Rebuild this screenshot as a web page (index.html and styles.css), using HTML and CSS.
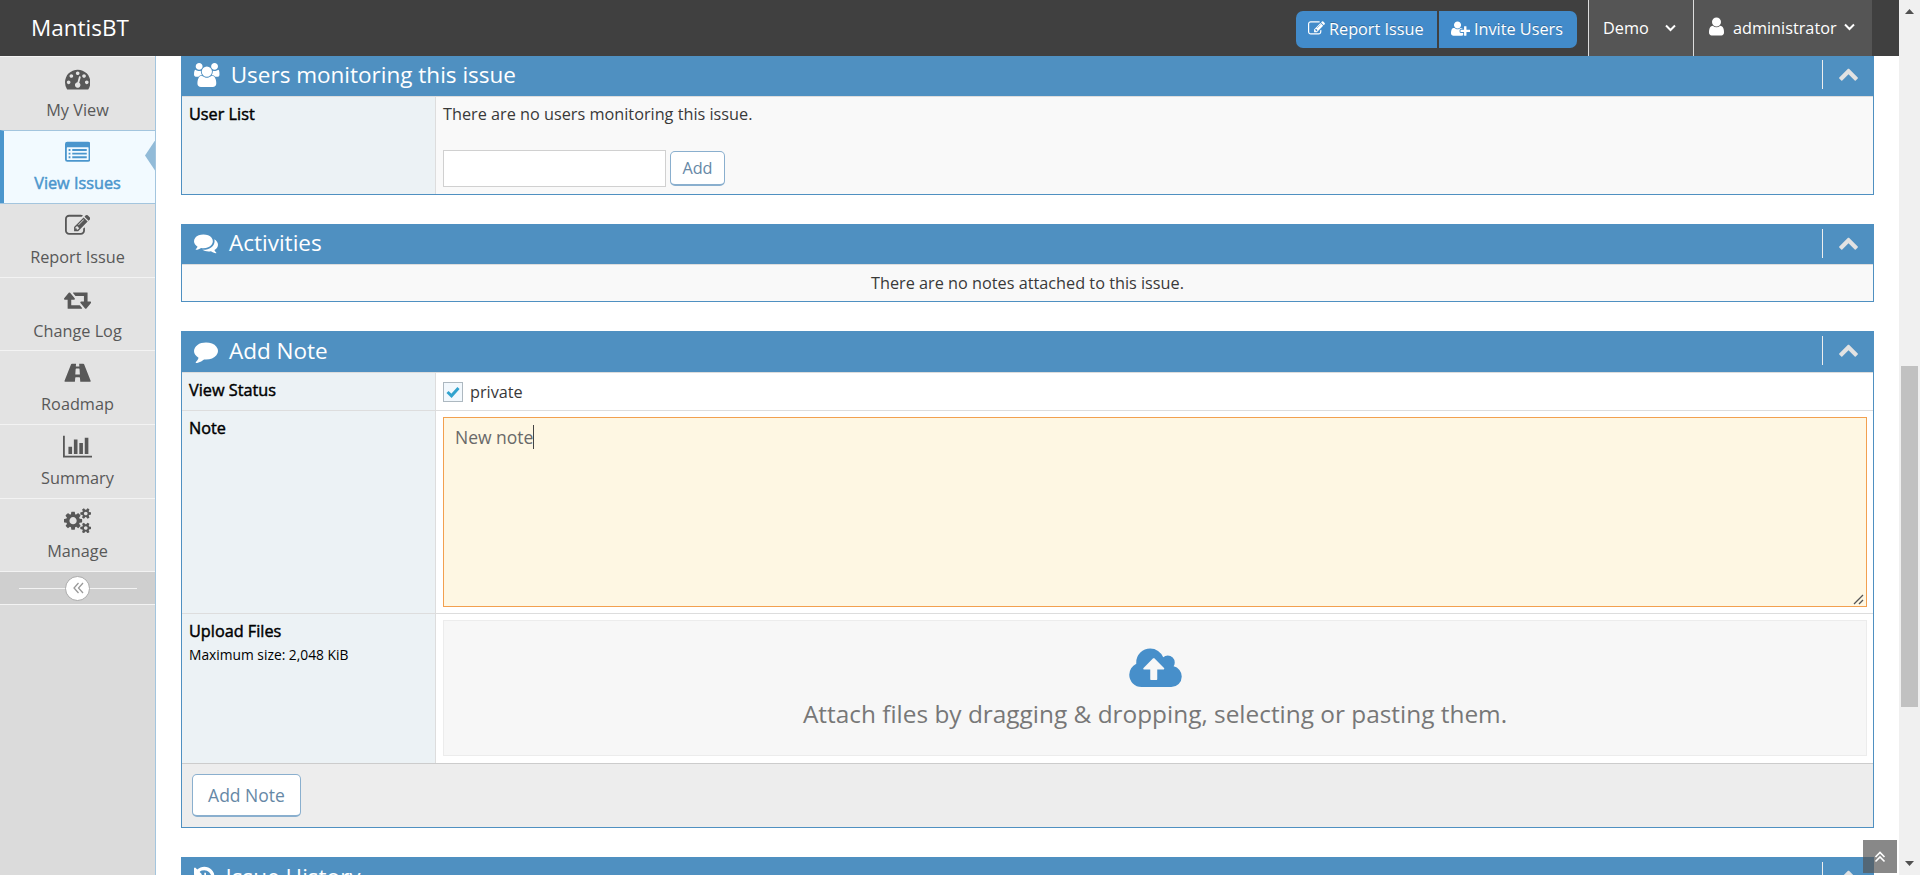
FILE: index.html
```
<!DOCTYPE html>
<html lang="en">
<head>
<meta charset="utf-8">
<title>MantisBT</title>
<link rel="stylesheet" href="styles.css">
</head>
<body>
<svg class="defs" aria-hidden="true">
<symbol id="dash" viewBox="0 0 1792 1792"><path d="M384 1152q0-53-37.5-90.5t-90.5-37.5-90.5 37.5-37.5 90.5 37.5 90.5 90.5 37.5 90.5-37.5 37.5-90.5zm192-448q0-53-37.5-90.5t-90.5-37.5-90.5 37.5-37.5 90.5 37.5 90.5 90.5 37.5 90.5-37.5 37.5-90.5zm428 481l101-382q6-26-7.5-48.5t-38.5-29.5-48 6.5-30 39.5l-101 382q-60 5-107 43.5t-63 98.5q-20 77 20 146t117 89 146-20 89-117q16-60-6-117t-72-91zm660-33q0-53-37.5-90.5t-90.5-37.5-90.5 37.5-37.5 90.5 37.5 90.5 90.5 37.5 90.5-37.5 37.5-90.5zm-640-640q0-53-37.5-90.5t-90.5-37.5-90.5 37.5-37.5 90.5 37.5 90.5 90.5 37.5 90.5-37.5 37.5-90.5zm448 192q0-53-37.5-90.5t-90.5-37.5-90.5 37.5-37.5 90.5 37.5 90.5 90.5 37.5 90.5-37.5 37.5-90.5zm320 448q0 261-141 483-19 29-54 29h-1402q-35 0-54-29-141-221-141-483 0-182 71-348t191-286 286-191 348-71 348 71 286 191 191 286 71 348z"/></symbol>
<symbol id="list" viewBox="0 0 1792 1792"><path fill-rule="evenodd" d="M160 128h1472a160 160 0 0 1 160 160v1088a160 160 0 0 1-160 160H160a160 160 0 0 1-160-160V288a160 160 0 0 1 160-160zM160 512a32 32 0 0 0-32 32v832a32 32 0 0 0 32 32h1472a32 32 0 0 0 32-32V544a32 32 0 0 0-32-32z"/><path d="M256 640h128v128H256zM256 896h128v128H256zM256 1152h128v128H256zM512 640h1024v128H512zM512 896h1024v128H512zM512 1152h1024v128H512z"/></symbol>
<symbol id="edit" viewBox="0 0 1792 1792"><path d="M888 1184l116-116-152-152-116 116v56h96v96h56zm440-720q-16-16-33 1l-350 350q-17 17-1 33t33-1l350-350q17-17 1-33zm80 594v190q0 119-84.5 203.5t-203.5 84.5h-832q-119 0-203.5-84.5t-84.5-203.5v-832q0-119 84.5-203.5t203.5-84.5h832q63 0 117 25 15 7 18 23 3 17-9 29l-49 49q-14 14-32 8-23-6-45-6h-832q-66 0-113 47t-47 113v832q0 66 47 113t113 47h832q66 0 113-47t47-113v-126q0-13 9-22l64-64q15-15 35-7t20 29zm-96-738l288 288-672 672h-288v-288zm444 132l-92 92-288-288 92-92q28-28 68-28t68 28l152 152q28 28 28 68t-28 68z"/></symbol>
<symbol id="retweet" viewBox="0 0 1920 1792"><path d="M1280 1504q0 13-9.5 22.5t-22.5 9.5h-960q-8 0-13.5-2t-9-7-5.5-8-3-11.5-1-11.5v-600h-192q-26 0-45-19t-19-45q0-24 15-41l320-384q19-22 49-22t49 22l320 384q15 17 15 41 0 26-19 45t-45 19h-192v384h576q16 0 25 11l160 192q7 10 7 21zm640-416q0 24-15 41l-320 384q-20 23-49 23t-49-23l-320-384q-15-17-15-41 0-26 19-45t45-19h192v-384h-576q-16 0-25-12l-160-192q-7-9-7-20 0-13 9.5-22.5t22.5-9.5h960q8 0 13.5 2t9 7 5.5 8 3 11.5 1 11.5v600h192q26 0 45 19t19 45z"/></symbol>
<symbol id="road" viewBox="0 0 1920 1792"><path fill-rule="evenodd" d="M560 256H850L836 440q-2 24 22 24h204q24 0 22-24L1070 256h290q42 0 60 42l440 1120q52 118-25 118H1150l-24-290q-2-30-34-30H828q-32 0-34 30l-24 290H85q-77 0-25-118L500 298q18-42 60-42zM850 608q-24 0-26 26l-26 370q-2 28 26 28h272q28 0 26-28l-26-370q-2-26-26-26z"/></symbol>
<symbol id="bars" viewBox="0 0 2048 1792"><path d="M640 896v512h-256v-512h256zm384-512v1024h-256v-1024h256zm1024 1152v128h-2048v-1536h128v1408h1920zm-640-896v768h-256v-768h256zm384-384v1152h-256v-1152h256z"/></symbol>
<symbol id="cogs" viewBox="0 0 1920 1792"><path d="M896 896q0-106-75-181t-181-75-181 75-75 181 75 181 181 75 181-75 75-181zm768 512q0-52-38-90t-90-38-90 38-38 90q0 53 37.5 90.5t90.5 37.5 90.5-37.5 37.5-90.5zm0-1024q0-52-38-90t-90-38-90 38-38 90q0 53 37.5 90.5t90.5 37.5 90.5-37.5 37.5-90.5zm-384 421v185q0 10-7 19.5t-16 10.5l-155 24q-11 35-32 76 34 48 90 115 7 11 7 20 0 12-7 19-23 30-82.5 89.5t-78.5 59.5q-11 0-21-7l-115-90q-37 19-77 31-11 108-23 155-7 24-30 24h-186q-11 0-20-7.5t-10-17.5l-23-153q-34-10-75-31l-118 89q-7 7-20 7-11 0-21-8-144-133-144-160 0-9 7-19 10-14 41-53t47-61q-23-44-35-82l-152-24q-10-1-17-9.5t-7-19.5v-185q0-10 7-19.5t16-10.5l155-24q11-35 32-76-34-48-90-115-7-11-7-20 0-12 7-20 22-30 82-89t79-59q11 0 21 7l115 90q34-18 77-32 11-108 23-154 7-24 30-24h186q11 0 20 7.5t10 17.5l23 153q34 10 75 31l118-89q8-7 20-7 11 0 21 8 144 133 144 160 0 8-7 19-12 16-42 54t-45 60q23 48 34 82l152 23q10 2 17 10.5t7 19.5zm640 533v140q0 16-149 31-12 27-30 52 51 113 51 138 0 4-4 7-122 71-124 71-8 0-46-47t-52-68q-20 2-30 2t-30-2q-14 21-52 68t-46 47q-2 0-124-71-4-3-4-7 0-25 51-138-18-25-30-52-149-15-149-31v-140q0-16 149-31 13-29 30-52-51-113-51-138 0-4 4-7 4-2 35-20t59-34 30-16q8 0 46 46.5t52 67.5q20-2 30-2t30 2q51-71 92-112l6-2q4 0 124 70 4 3 4 7 0 25-51 138 17 23 30 52 149 15 149 31zm0-1024v140q0 16-149 31-12 27-30 52 51 113 51 138 0 4-4 7-122 71-124 71-8 0-46-47t-52-68q-20 2-30 2t-30-2q-14 21-52 68t-46 47q-2 0-124-71-4-3-4-7 0-25 51-138-18-25-30-52-149-15-149-31v-140q0-16 149-31 13-29 30-52-51-113-51-138 0-4 4-7 4-2 35-20t59-34 30-16q8 0 46 46.5t52 67.5q20-2 30-2t30 2q51-71 92-112l6-2q4 0 124 70 4 3 4 7 0 25-51 138 17 23 30 52 149 15 149 31z"/></symbol>
<symbol id="users" viewBox="0 0 1920 1792"><path d="M593 896q-162 5-265 128h-134q-82 0-138-40.5t-56-118.5q0-353 124-353 6 0 43.5 21t97.5 42.5 119 21.5q67 0 133-23-5 37-5 66 0 139 81 256zm1071 637q0 120-73 189.5t-194 69.5h-874q-121 0-194-69.5t-73-189.5q0-53 3.5-103.5t14-109 26.5-108.5 43-97.5 62-81 85.5-53.5 111.5-20q10 0 43 21.5t73 48 107 48 135 21.5 135-21.5 107-48 73-48 43-21.5q61 0 111.5 20t85.5 53.5 62 81 43 97.5 26.5 108.5 14 109 3.5 103.5zm-1024-1277q0 106-75 181t-181 75-181-75-75-181 75-181 181-75 181 75 75 181zm704 384q0 159-112.5 271.5t-271.5 112.5-271.5-112.5-112.5-271.5 112.5-271.5 271.5-112.5 271.5 112.5 112.5 271.5zm576 225q0 78-56 118.5t-138 40.5h-134q-103-123-265-128 81-117 81-256 0-29-5-66 66 23 133 23 59 0 119-21.5t97.5-42.5 43.5-21q124 0 124 353zm-128-609q0 106-75 181t-181 75-181-75-75-181 75-181 181-75 181 75 75 181z"/></symbol>
<symbol id="comments" viewBox="0 0 1792 1792"><path d="M1408 768q0 139-94 257t-256.500 186.500-353.500 68.500q-86 0-176-16-124 88-278 128-36 9-86 16h-3q-11 0-20.500-8t-11.500-21q-1-3-1-6.500t.5-6.500 2-6l2.500-5 3.500-5.500 4-5 4.500-5 4-4.500q5-6 23-25t26-29.500 22.500-29 25-38.500 20.500-44q-124-72-195-177t-71-224q0-139 94-257t256.500-186.500 353.500-68.500 353.500 68.500 256.500 186.500 94 257zm384 256q0 120-71 224.500t-195 176.500q10 24 20.500 44t25 38.500 22.500 29 26 29.500 23 25q1 1 4 4.500t4.500 5 4 5 3.500 5.500l2.500 5 2 6 .5 6.500-1 6.500q-3 14-13 22t-22 7q-50-7-86-16-154-40-278-128-90 16-176 16-271 0-472-132 58 4 88 4 161 0 309-45t264-129q125-92 192-212t67-254q0-77-23-152 129 71 204 178t75 230z"/></symbol>
<symbol id="comment" viewBox="0 0 1792 1792"><path d="M1792 896q0 174-120 321.500t-326 233-450 85.500q-70 0-145-8-198 175-460 242-49 14-114 22-17 2-30.500-9t-17.500-29v-1q-3-4-.5-12t2-10 4.500-9.500l6-9 7-8.500 8-9q7-8 31-34.500t34.500-38 31-39.500 32.500-51 27-59 26-76q-157-89-247.500-220t-90.500-281q0-130 71-248.500t191-204.500 286-136.500 348-50.500q244 0 450 85.500t326 233 120 321.500z"/></symbol>
<symbol id="history" viewBox="0 0 1536 1792"><path d="M1536 896q0 156-61 298t-164 245-245 164-298 61q-172 0-327-72.500t-264-204.500q-7-10-6.500-22.500t8.500-20.500l137-138q10-9 25-9 16 2 23 12 73 95 179 147t225 52q104 0 198.500-40.500t163.500-109.500 109.500-163.500 40.500-198.500-40.500-198.500-109.500-163.500-163.500-109.500-198.500-40.500q-98 0-188 35.500t-160 101.500l137 138q31 30 14 69-17 40-59 40h-448q-26 0-45-19t-19-45v-448q0-42 40-59 39-17 69 14l130 129q107-101 244.500-156.500t284.500-55.500q156 0 298 61t245 164 164 245 61 298zm-640-288v448q0 14-9 23t-23 9h-320q-14 0-23-9t-9-23v-64q0-14 9-23t23-9h224v-352q0-14 9-23t23-9h64q14 0 23 9t9 23z"/></symbol>
<symbol id="up" viewBox="0 0 1792 1792"><path d="M1683 1331l-166 165q-19 19-45 19t-45-19l-531-531-531 531q-19 19-45 19t-45-19l-166-165q-19-19-19-45.500t19-45.500l742-741q19-19 45-19t45 19l742 741q19 19 19 45.500t-19 45.500z"/></symbol>
<symbol id="user" viewBox="256 0 1280 1792"><path d="M1536 1399q0 109-62.500 187t-150.500 78h-854q-88 0-150.500-78t-62.500-187q0-85 8.500-160.500t31.500-152 58.500-131 94-89 134.500-34.500q131 128 313 128t313-128q76 0 134.500 34.500t94 89 58.500 131 31.500 152 8.500 160.500zm-256-887q0 159-112.500 271.500t-271.500 112.500-271.500-112.500-112.500-271.500 112.500-271.500 271.500-112.500 271.500 112.500 112.500 271.500z"/></symbol>
<symbol id="userplus" viewBox="0 0 2048 1792"><path d="M704 896q-159 0-271.500-112.500t-112.500-271.500 112.500-271.500 271.500-112.500 271.500 112.500 112.500 271.500-112.500 271.500-271.500 112.500zm960 128h352q13 0 22.500 9.500t9.500 22.500v192q0 13-9.500 22.500t-22.500 9.500h-352v352q0 13-9.500 22.500t-22.500 9.500h-192q-13 0-22.500-9.500t-9.500-22.500v-352h-352q-13 0-22.500-9.500t-9.500-22.500v-192q0-13 9.500-22.500t22.500-9.500h352v-352q0-13 9.500-22.500t22.500-9.500h192q13 0 22.500 9.500t9.500 22.500v352zm-736 224q0 52 38 90t90 38h256v238q-68 50-171 50h-874q-121 0-194-69t-73-190q0-53 3.500-103.500t14-109 26.500-108.500 43-97.500 62-81 85.500-53.500 111.500-20q19 0 39 17 79 61 154.500 91.500t164.500 30.500 164.500-30.500 154.500-91.500q20-17 39-17 132 0 217 96h-223q-52 0-90 38t-38 90v192z"/></symbol>
<symbol id="cloud" viewBox="0 0 1920 1792"><path d="M1280 864q0-14-9-23l-352-352q-9-9-23-9t-23 9l-351 351q-10 12-10 24 0 14 9 23t23 9h224v352q0 13 9.500 22.500t22.500 9.500h192q13 0 22.500-9.500t9.500-22.500v-352h224q13 0 22.500-9.500t9.500-22.500zm640 288q0 159-112.500 271.500t-271.500 112.500h-1088q-185 0-316.500-131.500t-131.500-316.500q0-130 70-240t188-165q-2-30-2-43 0-212 150-362t362-150q156 0 285.500 87t188.500 231q71-62 166-62 106 0 181 75t75 181q0 76-41 138 130 31 213.500 135.500t83.500 238.500z"/></symbol>
</svg>

<header class="navbar">
  <div class="brand">MantisBT</div>
  <nav class="nav-actions">
    <div class="btn-group">
      <a class="btn-primary report"><svg class="i-edit"><use href="#edit"/></svg>Report Issue</a>
      <a class="btn-primary invite"><svg class="i-plus"><use href="#userplus"/></svg>Invite Users</a>
    </div>
    <a class="drop project">Demo<svg class="angle" viewBox="0 0 11 8"><path d="M1 1.500l4.500 4.500L10 1.500"/></svg></a>
    <a class="drop account"><svg class="i-user"><use href="#user"/></svg>administrator<svg class="angle near" viewBox="0 0 11 8"><path d="M1 1.500l4.500 4.500L10 1.500"/></svg></a>
  </nav>
</header>

<div class="body">
  <aside class="sidebar">
    <a class="item"><svg><use href="#dash"/></svg><span>My View</span></a>
    <a class="item active"><svg><use href="#list"/></svg><span>View Issues</span></a>
    <a class="item"><svg><use href="#edit"/></svg><span>Report Issue</span></a>
    <a class="item"><svg class="wide"><use href="#retweet"/></svg><span>Change Log</span></a>
    <a class="item"><svg class="wide"><use href="#road"/></svg><span>Roadmap</span></a>
    <a class="item"><svg class="wider"><use href="#bars"/></svg><span>Summary</span></a>
    <a class="item"><svg class="wide"><use href="#cogs"/></svg><span>Manage</span></a>
    <div class="collapse"><i class="circle"><svg viewBox="0 0 11 12"><path d="M5.500 1L1 6l4.500 5M10 1L5.500 6l4.500 5"/></svg></i></div>
  </aside>

  <main class="content">
    <section class="widget monitoring">
      <h4 class="head"><svg class="wide"><use href="#users"/></svg><span>Users monitoring this issue</span><i class="toggle"><svg><use href="#up"/></svg></i></h4>
      <div class="row striped">
        <div class="th">User List</div>
        <div class="td">
          <div>There are no users monitoring this issue.</div>
          <div class="form"><input class="text" type="text"><button class="btn small">Add</button></div>
        </div>
      </div>
    </section>

    <section class="widget activities">
      <h4 class="head"><svg><use href="#comments"/></svg><span>Activities</span><i class="toggle"><svg><use href="#up"/></svg></i></h4>
      <div class="empty">There are no notes attached to this issue.</div>
    </section>

    <section class="widget addnote">
      <h4 class="head"><svg><use href="#comment"/></svg><span>Add Note</span><i class="toggle"><svg><use href="#up"/></svg></i></h4>
      <div class="row status">
        <div class="th">View Status</div>
        <div class="td check-cell"><i class="check"><svg viewBox="0 0 14 12"><path d="M1.500 6l4 3.800L12.500 2"/></svg></i>private</div>
      </div>
      <div class="row note">
        <div class="th">Note</div>
        <div class="td">
          <div class="textarea"><span>New note</span><i class="caret"></i>
            <svg class="grip" viewBox="0 0 11 11"><path d="M1 10l9-9M6 10l4-4"/></svg></div>
        </div>
      </div>
      <div class="row upload">
        <div class="th">Upload Files<small>Maximum size: 2,048 KiB</small></div>
        <div class="td"><div class="dropzone"><svg><use href="#cloud"/></svg><span>Attach files by dragging &amp; dropping, selecting or pasting them.</span></div></div>
      </div>
      <div class="toolbox"><button class="btn large">Add Note</button></div>
    </section>

    <section class="widget history">
      <h4 class="head"><svg class="narrow"><use href="#history"/></svg><span>Issue History</span><i class="toggle"><svg><use href="#up"/></svg></i></h4>
    </section>
  </main>
</div>

<div class="scrollbar"><i class="arrow arrow-up"></i><i class="thumb"></i><i class="arrow arrow-down"></i></div>
<a class="to-top"><svg viewBox="0 0 12 12"><path d="M1.500 6L6 1.500 10.500 6M1.500 10.500L6 6l4.500 4.500"/></svg></a>
</body>
</html>
```
FILE: styles.css
```
* { box-sizing: border-box; }
html, body { height: 100%; }
body {
  margin: 0;
  display: grid;
  grid-template: 56px minmax(0, 1fr) / minmax(0, 1fr) 21px;
  overflow: hidden;
  background: #fff;
  color: #393939;
  font: 16.25px/24px "Open Sans", sans-serif;
}
svg { fill: currentColor; flex: none; }
.defs { position: absolute; width: 0; height: 0; }

.navbar {
  display: flex;
  justify-content: space-between;
  background: #404040;
  color: #fff;
  position: relative;
  z-index: 1;
}
.brand { padding: 0 0 0 31px; font-size: 22.5px; line-height: 56px; }
.nav-actions { display: flex; margin-right: 27px; }
.btn-group { display: flex; gap: 2px; align-items: flex-start; padding-top: 11px; margin-right: 11px; }
.btn-primary {
  display: flex;
  align-items: center;
  gap: 4px;
  height: 37px;
  padding-bottom: 2px;
  background: #428bca;
  text-shadow: 0 -1px 0 rgba(0, 0, 0, .25);
}
.report { width: 141px; padding-left: 12px; border-radius: 7px 0 0 7px; }
.invite { width: 138px; padding-left: 12px; border-radius: 0 7px 7px 0; }
.i-edit { width: 17px; height: 17px; }
.i-plus { width: 19px; height: 17px; }
.drop {
  display: flex;
  align-items: center;
  height: 56px;
  background: #555;
  border-left: 1px solid #ddd;
}
.project { width: 105px; padding-left: 14px; }
.account { width: 179px; padding-left: 15px; }
.i-user { width: 15px; height: 21px; margin: -3px 9px 0 0; }
.angle { width: 11px; height: 8px; margin-left: 16px; fill: none; stroke: #fff; stroke-width: 2; }
.angle.near { margin-left: 7px; margin-top: -3px; }

.body { display: flex; min-height: 0; overflow: hidden; }
.sidebar {
  flex: none;
  width: 156px;
  background: #dbdbdb;
  border-right: 1px solid #a3c5de;
}
.item {
  display: flex;
  flex-direction: column;
  align-items: center;
  height: 73.6px;
  padding-top: 9px;
  border-top: 1px solid #f3f3f3;
  background: #e3e3e3;
  color: #585858;
  position: relative;
}
.item svg { width: 25.400px; height: 25.400px; }
.item svg.wide { width: 27.200px; }
.item svg.wider { width: 29px; }
.item span { margin-top: 6.5px; }
.item.active {
  background: #f2faff;
  border-top-color: #a3c5de;
  color: #4b96cd;
  border-left: 4px solid #4b96cd;
  padding-right: 4px;
  box-shadow: 0 1px 0 #a3c5de;
  z-index: 1;
}
.item.active span { -webkit-text-stroke: .5px; }
.item.active::after {
  content: "";
  position: absolute;
  right: 0;
  top: 10px;
  width: 10px;
  height: 30px;
  background: #92bbd8;
  clip-path: polygon(100% 0, 100% 100%, 0 50%);
}
.collapse {
  display: flex;
  align-items: center;
  justify-content: center;
  height: 34px;
  border: solid #f3f3f3;
  border-width: 1px 0;
  background: linear-gradient(#f3f3f3, #f3f3f3) 19px 16px / 118px 1px no-repeat #cfcfcf;
}
.circle {
  display: grid;
  place-items: center;
  width: 25px;
  height: 25px;
  border: 1px solid #aaa;
  border-radius: 50%;
  background: #fff;
}
.circle svg { width: 11px; height: 12px; fill: none; stroke: #999; stroke-width: 1.3; margin-left: 1px; }

.content { flex: 1; min-width: 0; padding: 0 25px; margin-top: -1px; }
.widget { border: 1px solid #4f90c1; margin-bottom: 29px; }
.head {
  display: flex;
  align-items: center;
  height: 41px;
  margin: 0;
  padding: 0 0 3px 12px;
  background: #4f90c1;
  border-bottom: 1px solid #ddd;
  color: #fff;
  font-size: 22.5px;
  font-weight: 400;
  line-height: 36px;
}
.head > svg { width: 24px; height: 24px; margin-right: 11px; }
.head > svg.wide { width: 25.700px; }
.head > svg.narrow { width: 20.600px; }
.head .toggle {
  display: grid;
  place-items: center;
  width: 51px;
  height: 29px;
  margin: 0 0 0 auto;
  border-left: 1px solid #eee;
}
.toggle svg { width: 21px; height: 21px; color: #e2e2e2; margin-top: -2px; }
.activities .head { height: 40px; }

.row { display: flex; border-bottom: 1px solid #ddd; }
.row .th {
  flex: none;
  width: 254px;
  padding: 5px 6px 0 7px;
  background: #ecf2f5;
  border-right: 1px solid #ddd;
  color: #000;
  -webkit-text-stroke: .45px;
}
.th small { display: block; font-size: 13.8px; -webkit-text-stroke: 0; }
.row .td { flex: 1; padding: 6px 6px 0 7px; }
.striped { height: 97px; background: #f9f9f9; border-bottom: 0; }
.row.striped .td { padding-top: 5px; }
.form { display: flex; align-items: center; gap: 4px; margin-top: 24px; }
.text { width: 223px; height: 37px; border: 1px solid #d0d0d0; background: #fff; padding: 0; }
.btn {
  display: block;
  padding: 0;
  background: #fff;
  border: 1px solid #8aafce;
  border-bottom-width: 2px;
  border-radius: 5px;
  color: #6688a6;
  font: 16.25px/22px "Open Sans", sans-serif;
}
.btn.small { width: 55px; height: 35px; }
.btn.large { width: 109px; height: 43px; padding-bottom: 1px; font-size: 17.500px; }
.empty { height: 36px; line-height: 36px; text-align: center; background: #f9f9f9; }

.status { height: 38px; }
.row .check-cell { display: flex; align-items: center; padding-top: 0; }
.check {
  display: grid;
  place-items: center;
  width: 20px;
  height: 20px;
  margin-right: 7px;
  border: 1px solid #adb8c0;
  background: #f2f8fd;
}
.check svg { width: 14px; height: 12px; fill: none; stroke: #32a3ce; stroke-width: 3; }
.note { height: 203px; }
.textarea {
  display: flex;
  align-items: flex-start;
  height: 190px;
  padding: 7px 11px;
  border: 1px solid #f2a04f;
  background: #fef7e3;
  color: #696969;
  font-size: 17.500px;
  line-height: 25px;
  position: relative;
}
.caret { width: 1px; height: 24px; background: #444; }
.grip { position: absolute; right: 2px; bottom: 1px; width: 11px; height: 11px; fill: none; stroke: #555; stroke-width: 1.3; }
.upload { height: 150px; border-bottom-color: #ccc; }
.dropzone {
  display: flex;
  flex-direction: column;
  align-items: center;
  height: 136px;
  padding-top: 24px;
  border: 1px solid #ececec;
  background: #f7f7f7;
  color: #777;
  font-size: 24.4px;
  line-height: 40px;
}
.dropzone svg { width: 53px; height: 49px; color: #478fca; }
.toolbox { height: 63px; padding: 10px 10px; background: #ededed; }

.scrollbar {
  grid-area: 1 / 2 / 3 / 3;
  display: flex;
  flex-direction: column;
  align-items: center;
  background: #f0f0f0;
}
.arrow { width: 9px; height: 5px; background: #505050; }
.arrow-up { margin-top: 9px; clip-path: polygon(50% 0, 100% 100%, 0 100%); }
.arrow-down { margin-top: auto; margin-bottom: 9px; clip-path: polygon(0 0, 100% 0, 50% 100%); }
.thumb { width: 17px; height: 341px; margin-top: 352px; background: #c1c1c1; }
.to-top {
  position: absolute;
  right: 23px;
  bottom: 2px;
  display: grid;
  place-items: center;
  width: 34px;
  height: 33px;
  background: rgba(85, 85, 85, .7);
}
.to-top svg { width: 12px; height: 12px; fill: none; stroke: #fff; stroke-width: 1.600; }
```
